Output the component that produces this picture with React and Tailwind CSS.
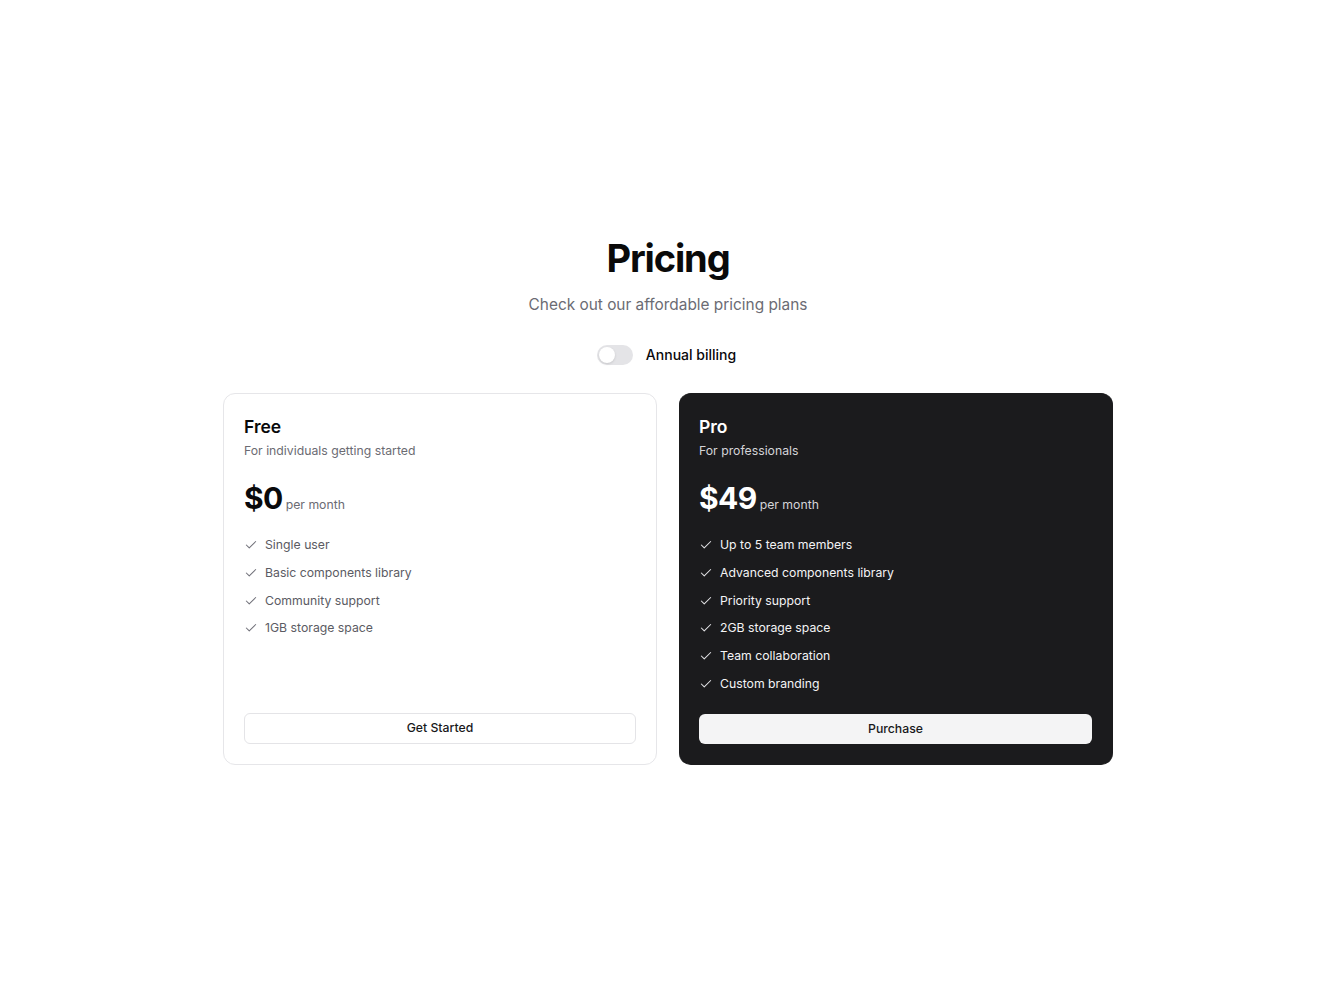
import React from "react";

function CheckIcon({ className }) {
  return (
    <svg width="14" height="14" viewBox="0 0 24 24" fill="none" stroke="currentColor" strokeWidth="1.8" strokeLinecap="round" strokeLinejoin="round" className={className}>
      <path d="M20 6 9 17l-5-5" />
    </svg>
  );
}

function Card({ dark, name, desc, price, features, cta }) {
  return (
    <div
      className={
        "flex flex-col rounded-xl pt-[19px] pb-5 " +
        (dark ? "bg-[#1b1b1d] text-white pl-5 pr-[21px] border-y" + " border-[#1b1b1d]" : "bg-white border border-[#e6e6e9] text-[#09090b] px-5")
      }
    >
      <div className="text-[17.5px] leading-7 font-semibold">{name}</div>
      <div className={"text-[12.25px] leading-5 " + (dark ? "text-[#d4d4d8]" : "text-[#6b6b73]")}>{desc}</div>
      <div className="mt-[17px] flex items-baseline gap-[3px]">
        <span className="text-[30px] leading-10 font-bold tracking-[-0.02em]">{price}</span>
        <span className={"text-[12.25px] " + (dark ? "text-[#d4d4d8]" : "text-[#6b6b73]")}>per month</span>
      </div>
      <ul className="mt-[17px] flex flex-1 flex-col gap-[7.8px]">
        {features.map((f) => (
          <li key={f} className={"flex items-center gap-[7px] text-[12.25px] leading-5 " + (dark ? "text-[#f4f4f5]" : "text-[#5b5b63]")}>
            <CheckIcon className={dark ? "text-[#e4e4e7]" : "text-[#71717a]"} />
            <span>{f}</span>
          </li>
        ))}
      </ul>
      <button
        className={
          "mt-[20px] w-full rounded-md text-[12.25px] font-medium " +
          (dark ? "h-[30px] bg-[#f4f4f5] text-[#18181b]" : "h-[31px] border border-[#e4e4e7] bg-white text-[#18181b]")
        }
      >
        {cta}
      </button>
    </div>
  );
}

export default function App() {
  return (
    <div className="min-h-screen bg-white flex flex-col items-center pt-[236px]" style={{ fontFamily: "Inter, 'Noto Sans', sans-serif" }}>
      <h1 className="text-[38px] leading-[44px] font-bold tracking-[-0.03em] text-[#0a0a0a]">Pricing</h1>
      <p className="mt-[13px] text-[15.4px] leading-6 text-[#6b6b73]">Check out our affordable pricing plans</p>
      <div className="mt-[27px] mr-[3px] flex items-center gap-[13px]">
        <div className="flex h-5 w-9 items-center rounded-full bg-[#e4e4e7] p-[2px]">
          <div className="h-4 w-4 rounded-full bg-white shadow-sm" />
        </div>
        <span className="text-[14px] font-medium text-[#09090b]">Annual billing</span>
      </div>
      <div className="mt-[28px] grid w-[890px] grid-cols-2 gap-[22px]">
        <Card
          name="Free"
          desc="For individuals getting started"
          price="$0"
          features={["Single user", "Basic components library", "Community support", "1GB storage space"]}
          cta="Get Started"
        />
        <Card
          dark
          name="Pro"
          desc="For professionals"
          price="$49"
          features={["Up to 5 team members", "Advanced components library", "Priority support", "2GB storage space", "Team collaboration", "Custom branding"]}
          cta="Purchase"
        />
      </div>
    </div>
  );
}
